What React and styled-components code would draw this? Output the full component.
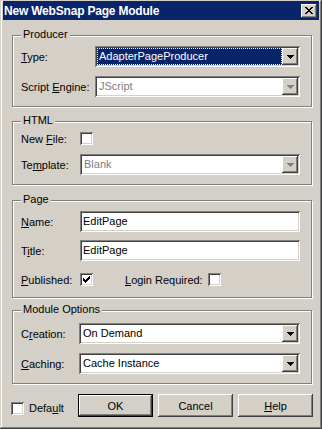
import styled, { createGlobalStyle } from "styled-components";

const Global = createGlobalStyle`
  html, body { margin: 0; padding: 0; background: #d4d0c8; }
  * { box-sizing: border-box; }
  body {
    font-family: "Liberation Sans", Arial, sans-serif;
    font-size: 11px;
    color: #000;
  }
`;

const raised = `
  box-shadow: inset -1px -1px 0 #404040, inset 1px 1px 0 #ffffff,
    inset -2px -2px 0 #808080, inset 2px 2px 0 #d4d0c8;
`;

const sunken = `
  box-shadow: inset 1px 1px 0 #808080, inset -1px -1px 0 #ffffff,
    inset 2px 2px 0 #404040, inset -2px -2px 0 #d4d0c8;
`;

const Window = styled.div`
  width: 322px;
  height: 429px;
  background: #d4d0c8;
  padding: 1px 3px 3px 3px;
  display: flex;
  flex-direction: column;
  box-shadow: inset -1px -1px 0 #404040, inset 1px 1px 0 #d4d0c8,
    inset -2px -2px 0 #808080, inset 2px 2px 0 #ffffff;
`;

const TitleBar = styled.div`
  height: 19px;
  background: #0a246a;
  display: flex;
  align-items: center;
  justify-content: space-between;
  padding: 0 2px 0 1px;
`;

const Title = styled.span`
  color: #fff;
  font-weight: bold;
  font-size: 12px;
  letter-spacing: -0.2px;
`;

const CloseButton = styled.div`
  width: 16px;
  height: 14px;
  background: #d4d0c8;
  display: flex;
  align-items: center;
  justify-content: center;
  ${raised}
`;

const Body = styled.div`
  display: flex;
  flex-direction: column;
  padding: 0 7px 0 9px;
`;

const Group = styled.div`
  position: relative;
  margin-top: ${(p) => p.$mt}px;
  border: 1px solid #808080;
  box-shadow: inset 1px 1px 0 #fff, 1px 1px 0 #fff;
  padding: ${(p) => p.$pt}px 11px ${(p) => p.$pb}px 8px;
  display: flex;
  flex-direction: column;
  gap: ${(p) => p.$gap}px;
`;

const Legend = styled.span`
  position: absolute;
  top: -8px;
  left: 8px;
  padding: 0 2px;
  line-height: 13px;
  background: #d4d0c8;
`;

const Row = styled.div`
  display: grid;
  grid-template-columns: ${(p) => p.$label}px 1fr;
  align-items: center;
  height: ${(p) => p.$h || 21}px;
`;

const Label = styled.span`
  white-space: nowrap;
`;

const Key = styled.span`
  text-decoration: underline;
  text-underline-offset: 1px;
`;

const Combo = styled.div`
  height: 21px;
  background: #fff;
  padding: 2px;
  display: flex;
  ${sunken}
`;

const ComboText = styled.div`
  flex: 1;
  line-height: 17px;
  padding-left: 2px;
  white-space: nowrap;
  color: ${(p) => (p.$disabled ? "#808080" : p.$selected ? "#fff" : "#000")};
  background: ${(p) => (p.$selected ? "#0a246a" : "transparent")};
  outline: ${(p) => (p.$selected ? "1px dotted #ffffc0" : "none")};
  outline-offset: -1px;
`;

const DropButton = styled.div`
  width: 16px;
  height: 17px;
  background: #d4d0c8;
  display: flex;
  align-items: center;
  justify-content: center;
  ${raised}
`;

const Edit = styled.div`
  height: 21px;
  background: #fff;
  padding: 2px 2px 2px 3px;
  line-height: 17px;
  ${sunken}
`;

const Box = styled.div`
  width: 13px;
  height: 13px;
  background: #fff;
  display: flex;
  align-items: center;
  justify-content: center;
  ${sunken}
`;

const CheckLine = styled.div`
  display: flex;
  align-items: center;
`;

const SubLabel = styled.span`
  width: 83px;
  margin-left: 32px;
  white-space: nowrap;
`;

const Footer = styled.div`
  display: flex;
  align-items: flex-start;
  margin-top: 10px;
  padding-left: 8px;
`;

const DefaultCheck = styled.div`
  width: 67px;
  margin-top: 8px;
  display: flex;
  align-items: center;
  gap: 5px;
  line-height: 13px;
`;

const Buttons = styled.div`
  display: flex;
  gap: 5px;
`;

const Button = styled.div`
  width: 75px;
  height: 23px;
  background: #d4d0c8;
  display: flex;
  align-items: center;
  justify-content: center;
  ${(p) =>
    p.$default
      ? `box-shadow: inset 0 0 0 1px #000, inset -2px -2px 0 #404040, inset 2px 2px 0 #fff, inset -3px -3px 0 #808080;`
      : raised}
`;

function Pixels({ rows, color, w, h }) {
  return (
    <svg width={w} height={h} shapeRendering="crispEdges">
      {rows.map((r, y) =>
        r.split("").map((c, x) =>
          c === "#" ? <rect key={x + "-" + y} x={x} y={y} width="1" height="1" fill={color} /> : null
        )
      )}
    </svg>
  );
}

const closeGlyph = ["##....##", ".##..##.", "..####..", "...##...", "..####..", ".##..##.", "##....##"];
const arrowGlyph = ["#######", ".#####.", "..###..", "...#..."];
const checkGlyph = ["......#", ".....##", "#...###", "##.###.", "#####..", ".###...", "..#...."];

function ComboBox({ value, selected, disabled }) {
  return (
    <Combo>
      <ComboText $selected={selected} $disabled={disabled}>
        {value}
      </ComboText>
      <DropButton>
        <Pixels rows={arrowGlyph} color={disabled ? "#808080" : "#000"} w={7} h={4} />
      </DropButton>
    </Combo>
  );
}

function Check({ checked }) {
  return <Box>{checked && <Pixels rows={checkGlyph} color="#000" w={7} h={7} />}</Box>;
}

export default function App() {
  return (
    <>
      <Global />
      <Window>
        <TitleBar>
          <Title>New WebSnap Page Module</Title>
          <CloseButton>
            <Pixels rows={closeGlyph} color="#000" w={8} h={7} />
          </CloseButton>
        </TitleBar>
        <Body>
          <Group $mt={15} $pt={10} $pb={9} $gap={9}>
            <Legend>Producer</Legend>
            <Row $label={74}>
              <Label>
                <Key>T</Key>ype:
              </Label>
              <ComboBox value="AdapterPageProducer" selected />
            </Row>
            <Row $label={74}>
              <Label>
                Script <Key>E</Key>ngine:
              </Label>
              <ComboBox value="JScript" disabled />
            </Row>
          </Group>

          <Group $mt={14} $pt={10} $pb={9} $gap={9}>
            <Legend>HTML</Legend>
            <Row $label={59} $h={13}>
              <Label>
                New <Key>F</Key>ile:
              </Label>
              <Check />
            </Row>
            <Row $label={59}>
              <Label>
                Te<Key>m</Key>plate:
              </Label>
              <ComboBox value="Blank" disabled />
            </Row>
          </Group>

          <Group $mt={15} $pt={10} $pb={7} $gap={8}>
            <Legend>Page</Legend>
            <Row $label={59}>
              <Label>
                <Key>N</Key>ame:
              </Label>
              <Edit>EditPage</Edit>
            </Row>
            <Row $label={59}>
              <Label>
                T<Key>i</Key>tle:
              </Label>
              <Edit>EditPage</Edit>
            </Row>
            <Row $label={59}>
              <Label>
                <Key>P</Key>ublished:
              </Label>
              <CheckLine>
                <Check checked />
                <SubLabel>
                  <Key>L</Key>ogin Required:
                </SubLabel>
                <Check />
              </CheckLine>
            </Row>
          </Group>

          <Group $mt={12} $pt={12} $pb={9} $gap={9}>
            <Legend>Module Options</Legend>
            <Row $label={58}>
              <Label>
                C<Key>r</Key>eation:
              </Label>
              <ComboBox value="On Demand" />
            </Row>
            <Row $label={58}>
              <Label>
                <Key>C</Key>aching:
              </Label>
              <ComboBox value="Cache Instance" />
            </Row>
          </Group>
        </Body>
        <Footer>
          <DefaultCheck>
            <Check />
            <span>
              Defa<Key>u</Key>lt
            </span>
          </DefaultCheck>
          <Buttons>
            <Button $default>OK</Button>
            <Button>Cancel</Button>
            <Button>
              <span>
                <Key>H</Key>elp
              </span>
            </Button>
          </Buttons>
        </Footer>
      </Window>
    </>
  );
}
